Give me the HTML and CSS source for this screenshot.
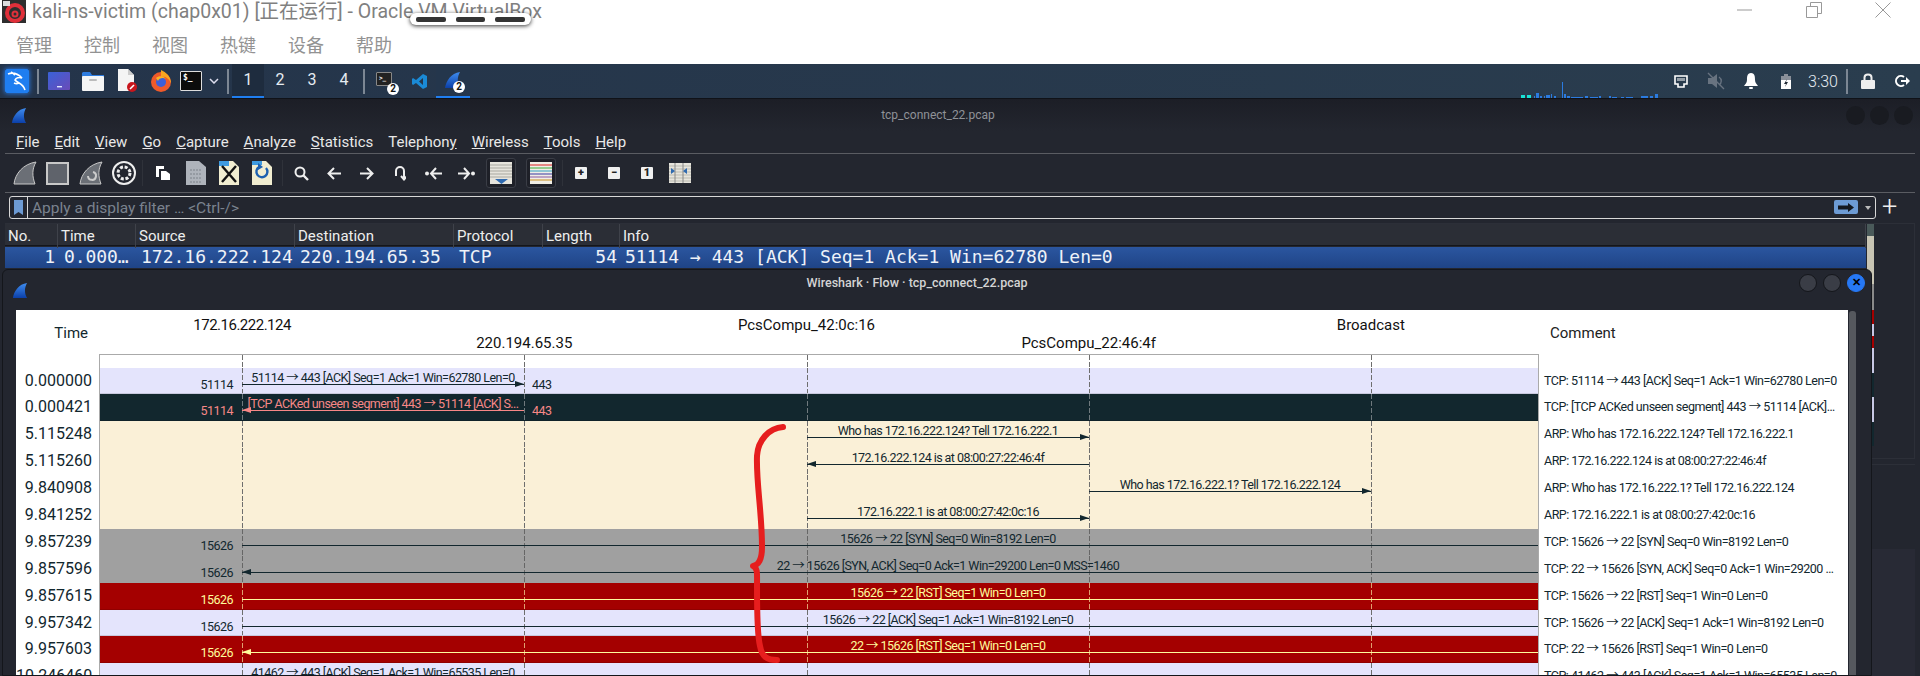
FILE: index.html
```html
<!DOCTYPE html>
<html lang="zh">
<head>
    <meta charset="UTF-8">
    <title>kali-ns-victim (chap0x01) [正在运行] - Oracle VM VirtualBox</title>
    <link rel="stylesheet" href="styles.css">
</head>
<body>

<svg class="defs" width="0" height="0">
    <defs>
        <linearGradient id="finBlue" x1="0" y1="0" x2="0" y2="1">
            <stop offset="0" stop-color="#3f8df0"/>
            <stop offset="1" stop-color="#0b3fa8"/>
        </linearGradient>
        <symbol id="fin" viewBox="0 0 18 18">
            <path d="M1 17C2 10 7 2 16 1C13 6 13 12 16 17Z"/>
        </symbol>
    </defs>
</svg>

<div class="desktop">

    <!-- virtualbox window chrome -->
    <div class="vbox-title">
        <svg class="vbox-logo" width="24" height="23" viewBox="0 0 24 23">
            <rect width="24" height="23" fill="#2e2e2e"/>
            <circle cx="13" cy="13" r="8" fill="none" stroke="#e0303a" stroke-width="4"/>
            <circle cx="13" cy="14" r="2.5" fill="none" stroke="#e0303a" stroke-width="2"/>
            <rect x="1" y="1" width="7" height="5" fill="#ddd"/>
        </svg>
        <span class="vbox-name">kali-ns-victim (chap0x01) [正在运行] - Oracle VM VirtualBox</span>
        <div class="mini-bar"><i></i><i class="short"></i><i></i></div>
        <div class="win-btns">
            <svg width="16" height="16" viewBox="0 0 16 16"><path d="M0 8H15" stroke="#999"/></svg>
            <svg width="16" height="16" viewBox="0 0 16 16"><path d="M.5 4.5H11.5V15.5H.5ZM4.5 4V.5H15.5V11.5H12" fill="none" stroke="#999"/></svg>
            <svg width="16" height="16" viewBox="0 0 16 16"><path d="M.5.5L15.5 15.5M15.5.5L.5 15.5" stroke="#999"/></svg>
        </div>
    </div>
    <div class="vbox-menu">
        <span>管理</span><span>控制</span><span>视图</span><span>热键</span><span>设备</span><span>帮助</span>
    </div>

    <!-- kali panel -->
    <div class="taskbar">
        <div class="slot">
            <svg class="kali" width="24" height="24" viewBox="0 0 24 24">
                <rect width="24" height="24" rx="2" fill="#1f7ef0"/>
                <path d="M3 5C8 3 13 5 17 9C14 8 11 9 10 11C12 14 18 14 20 21M14 14C12 15 11 15 9 14M6 3L10 6" fill="none" stroke="#fff" stroke-width="1.6"/>
            </svg>
        </div>
        <div class="tb-sep"></div>
        <div class="slot">
            <svg width="22" height="18" viewBox="0 0 22 18">
                <defs><linearGradient id="deskGrad" x1="0" x2="1" y1="0" y2="1"><stop offset="0" stop-color="#3a62d8"/><stop offset="1" stop-color="#6a4bb8"/></linearGradient></defs>
                <rect width="22" height="18" rx="1" fill="url(#deskGrad)"/>
                <rect x="9" y="14" width="5" height="1.4" fill="#dfe6ff"/>
            </svg>
        </div>
        <div class="slot">
            <svg width="22" height="20" viewBox="0 0 22 20">
                <path d="M0 2V6H22V4H10L8 1H1Z" fill="#2f7de0"/>
                <rect y="5" width="22" height="15" rx="1" fill="#f5f5f5"/>
                <rect x="7" y="8" width="8" height="2" rx="1" fill="#bbb"/>
            </svg>
        </div>
        <div class="slot">
            <svg width="20" height="24" viewBox="0 0 20 24">
                <path d="M1 0H11L17 6V22H1Z" fill="#f4f4f4"/>
                <path d="M11 0V6H17Z" fill="#ccc"/>
                <circle cx="15" cy="18" r="5" fill="#c8161d"/>
                <path d="M13 20L17 16" stroke="#fff" stroke-width="1.6"/>
            </svg>
        </div>
        <div class="slot">
            <svg width="22" height="24" viewBox="0 0 22 24">
                <circle cx="11" cy="13" r="10" fill="#ef5a2a"/>
                <path d="M11 1C16 3 21 8 21 14C18 8 14 7 11 8Z" fill="#f9a51f"/>
                <circle cx="11" cy="13" r="5" fill="#3d5fd8"/>
                <path d="M6 9C9 6 14 7 16 10C13 8 9 9 8 12Z" fill="#fbb423"/>
            </svg>
        </div>
        <div class="slot slot-term">
            <div class="term-icon">$_</div>
        </div>
        <div class="slot slot-chev">
            <svg width="10" height="6" viewBox="0 0 10 6"><path d="M1 1L5 5L9 1" fill="none" stroke="#dde" stroke-width="1.5"/></svg>
        </div>
        <div class="tb-sep"></div>
        <div class="workspaces">
            <span class="ws active">1</span><span class="ws">2</span><span class="ws">3</span><span class="ws">4</span>
        </div>
        <div class="tb-sep"></div>
        <div class="slot">
            <div class="term-icon small">&gt;_</div>
            <span class="badge">2</span>
        </div>
        <div class="slot">
            <svg width="15" height="15" viewBox="0 0 15 15">
                <path d="M11 0L15 2V13L11 15L4 9L1 11L0 10V5L1 4L4 6ZM11 4L7 7.5L11 11Z" fill="#1a8ad6"/>
            </svg>
        </div>
        <div class="slot active-app">
            <svg width="18" height="18" class="fin-blue"><use href="#fin"/></svg>
            <span class="badge">2</span>
        </div>

        <div class="tray">
            <svg class="cpu" width="141" height="16" viewBox="0 0 141 16">
                <rect x="0" y="13" width="4" height="3" fill="#19e3d6"/>
                <rect x="6" y="13" width="4" height="3" fill="#19e3d6"/>
                <path d="M13 14h1v2h-1zM15 11h3v5h-3zM19 14h2v2h-2zM23 14h1v2h-1zM25 13h4v3h-4zM30 12h1v4h-1zM33 14h2v2h-2zM41 0h1v16h-1zM43 12h2v4h-2zM46 14h3v2h-3zM50 15h12v1H50zM64 14h3v2h-3zM69 15h8v1h-8zM78 14h2v2h-2zM88 14h2v2h-2zM91 15h5v1h-5zM100 15h3v1h-3zM105 15h7v1h-7zM120 14h7v2h-7zM129 14h3v2h-3zM134 12h3v4h-3z" fill="#2b7be0"/>
            </svg>
            <span class="tray-slot">
                <svg width="14" height="13" viewBox="0 0 14 13"><path d="M1 1H13V9H10V12H4V9H1Z" fill="none" stroke="#fff" stroke-width="1.6"/><path d="M4 3V6M6 3V6M8 3V6M10 3V6" stroke="#fff"/></svg>
            </span>
            <span class="tray-slot">
                <svg width="18" height="18" viewBox="0 0 18 18"><path d="M1 6H5L10 2V16L5 12H1Z" fill="#687380"/><path d="M12 5C15 7 15 11 12 13M1 1L17 17" fill="none" stroke="#687380" stroke-width="1.4"/></svg>
            </span>
            <span class="tray-slot">
                <svg width="14" height="16" viewBox="0 0 14 16"><path d="M7 0C11 0 11 4 11 7C11 10 13 11 14 13H0C1 11 3 10 3 7C3 4 3 0 7 0Z" fill="#fff"/><rect x="5" y="14" width="4" height="2" rx="1" fill="#fff"/></svg>
            </span>
            <span class="tray-slot">
                <svg width="10" height="15" viewBox="0 0 10 15"><rect y="2" width="10" height="13" fill="#fff"/><rect y="2" width="10" height="4" fill="#8a8f98"/><rect x="3" width="4" height="2" fill="#8a8f98"/><path d="M6 5L3 10H5L4 13L7 8H5Z" fill="#222b36"/></svg>
            </span>
            <span class="clock">3:30</span>
            <div class="tb-sep"></div>
            <span class="tray-slot wide">
                <svg width="14" height="16" viewBox="0 0 14 16"><rect y="7" width="14" height="9" rx="1" fill="#eee"/><path d="M3.5 7V4.5C3.5 0.5 10.5 0.5 10.5 4.5V7" fill="none" stroke="#eee" stroke-width="2"/></svg>
            </span>
            <span class="tray-slot wide">
                <svg width="15" height="14" viewBox="0 0 15 14"><path d="M9 3A5 5 0 1 0 9 11" fill="none" stroke="#fff" stroke-width="2"/><path d="M6 6H11V3L15 7L11 11V8H6Z" fill="#fff"/></svg>
            </span>
        </div>
    </div>

    <!-- wireshark main window -->
    <div class="ws-window">
        <div class="ws-title">
            <svg width="18" height="18" class="fin-blue"><use href="#fin"/></svg>
            <span class="ws-name">tcp_connect_22.pcap</span>
            <div class="ws-dots"><i></i><i></i><i></i></div>
        </div>
        <div class="ws-menu">
            <span><u>F</u>ile</span><span><u>E</u>dit</span><span><u>V</u>iew</span><span><u>G</u>o</span><span><u>C</u>apture</span><span><u>A</u>nalyze</span><span><u>S</u>tatistics</span><span>Telephon<u>y</u></span><span><u>W</u>ireless</span><span><u>T</u>ools</span><span><u>H</u>elp</span>
        </div>
        <div class="ws-toolbar">
            <span class="tool"><svg width="24" height="24" viewBox="0 0 24 24"><path d="M1 23C2 13 10 3 23 1C19 8 19 15 22 23Z" fill="#6b6f76" stroke="#c8c8c8"/></svg></span>
            <span class="tool"><svg width="23" height="23" viewBox="0 0 23 23"><rect x="1" y="1" width="21" height="21" fill="#5f636b" stroke="#c8c8c8" stroke-width="2"/></svg></span>
            <span class="tool"><svg width="24" height="24" viewBox="0 0 24 24"><path d="M1 23C2 13 10 3 23 1C19 8 19 15 22 23Z" fill="#6b6f76" stroke="#c8c8c8"/><path d="M9 15A4 4 0 1 0 14 11" fill="none" stroke="#ccc" stroke-width="2"/></svg></span>
            <span class="tool"><svg width="24" height="24" viewBox="0 0 24 24"><circle cx="12" cy="12" r="11" fill="none" stroke="#eee" stroke-width="2"/><circle cx="12" cy="12" r="6" fill="none" stroke="#eee" stroke-width="3" stroke-dasharray="3 1.7"/></svg></span>
            <span class="tool-sep"></span>
            <span class="tool"><svg width="16" height="16" viewBox="0 0 16 16"><path d="M1 1H9V4H4V12H1Z" fill="#fff"/><path d="M6 6H11L15 9V15H6Z" fill="#fff"/></svg></span>
            <span class="tool"><svg width="20" height="24" viewBox="0 0 20 24"><path d="M0 0H13L20 6V24H0Z" fill="#aeb3bb"/><path d="M4 9H16M4 13H16M4 17H16M4 21H16" stroke="#7d828a" stroke-dasharray="2 1"/></svg></span>
            <span class="tool"><svg width="20" height="24" viewBox="0 0 20 24"><path d="M0 0H14L20 6V24H0Z" fill="#f1edd0"/><path d="M0 0H10V5H0Z" fill="#3f9be0"/><path d="M3 5L17 21M17 5L3 21" stroke="#111" stroke-width="2.4"/></svg></span>
            <span class="tool"><svg width="20" height="24" viewBox="0 0 20 24"><path d="M0 0H14L20 6V24H0Z" fill="#f1edd0"/><path d="M0 0H10V4H0Z" fill="#3f9be0"/><path d="M14 7A5.5 5.5 0 1 1 7 6" fill="none" stroke="#1c60b0" stroke-width="2.4"/><path d="M6 2L11 6L6 9Z" fill="#1c60b0"/></svg></span>
            <span class="tool-sep sep2"></span>
            <span class="tool"><svg width="15" height="15" viewBox="0 0 15 15"><circle cx="6" cy="6" r="4.5" fill="none" stroke="#eee" stroke-width="2"/><path d="M9 9L14 14" stroke="#eee" stroke-width="2.4"/></svg></span>
            <span class="tool"><svg width="14" height="13" viewBox="0 0 14 13"><path d="M7 1L1.5 6.5L7 12M2 6.5H14" fill="none" stroke="#eee" stroke-width="2"/></svg></span>
            <span class="tool"><svg width="14" height="13" viewBox="0 0 14 13"><path d="M7 1L12.5 6.5L7 12M12 6.5H0" fill="none" stroke="#eee" stroke-width="2"/></svg></span>
            <span class="tool"><svg width="12" height="15" viewBox="0 0 12 15"><path d="M2 10V5A4 4 0 0 1 10 5V13M7 10L10 13.5L13 10" fill="none" stroke="#eee" stroke-width="2"/></svg></span>
            <span class="tool"><svg width="17" height="13" viewBox="0 0 17 13"><circle cx="2" cy="6.5" r="2" fill="#eee"/><path d="M11 1L6 6.5L11 12M6.500 6.5H17" fill="none" stroke="#eee" stroke-width="2"/></svg></span>
            <span class="tool"><svg width="17" height="13" viewBox="0 0 17 13"><circle cx="15" cy="6.5" r="2" fill="#eee"/><path d="M6 1L11 6.5L6 12M10.500 6.500H0" fill="none" stroke="#eee" stroke-width="2"/></svg></span>
            <span class="tool-btn">
                <svg width="22" height="22" viewBox="0 0 22 22"><rect width="22" height="22" fill="#e6e4dc"/><path d="M0 3H22M0 6H22M0 9H22M0 12H22M0 15H22" stroke="#a9a8a0"/><path d="M5 17H18L11.500 22Z" fill="#2f6ab0"/></svg>
            </span>
            <span class="tool-btn">
                <svg width="22" height="22" viewBox="0 0 22 22"><rect width="22" height="22" fill="#f0eee6"/><path d="M0 3H22" stroke="#d82020"/><path d="M0 6H22" stroke="#3aa838"/><path d="M0 9H22" stroke="#30a0c0"/><path d="M0 12H22" stroke="#3838a0"/><path d="M0 15H22" stroke="#8a5aa0"/><path d="M0 18H22" stroke="#c89020"/></svg>
            </span>
            <span class="tool-sep sep3"></span>
            <span class="tool"><span class="zoom-key">+</span></span>
            <span class="tool"><span class="zoom-key">−</span></span>
            <span class="tool"><span class="zoom-key">1</span></span>
            <span class="tool"><svg width="22" height="20" viewBox="0 0 22 20"><rect width="22" height="20" fill="#e6e4dc"/><path d="M0 3H22M0 6H22M0 9H22M0 12H22M0 15H22M0 18H22" stroke="#bab9b0"/><path d="M6 0V20M14 0V20" stroke="#888"/><path d="M2 5L6 8L2 11ZM18 5L14 8L18 11Z" fill="#2f6ab0"/></svg></span>
        </div>
        <div class="filter-row">
            <div class="filter">
                <span class="bookmark"><svg width="9" height="15" viewBox="0 0 9 15"><path d="M0 0H9V15L4.500 12L0 15Z" fill="#6d9bd4"/></svg></span>
                <span class="filter-text">Apply a display filter … &lt;Ctrl-/&gt;</span>
                <span class="go-btn"><svg width="16" height="9" viewBox="0 0 16 9"><path d="M0 2.500H10V0L16 4.500L10 9V6.500H0Z" fill="#14181f"/></svg></span>
                <span class="filter-drop"></span>
            </div>
            <span class="filter-plus">+</span>
        </div>
        <div class="pkt-pane">
            <div class="pkt-list">
                <div class="pkt-head">
                    <span class="c-no">No.</span><span class="c-time">Time</span><span class="c-src">Source</span><span class="c-dst">Destination</span><span class="c-proto">Protocol</span><span class="c-len">Length</span><span class="c-info">Info</span>
                </div>
                <div class="pkt-row">
                    <span class="c-no num">1</span><span class="c-time">0.000…</span><span class="c-src">172.16.222.124</span><span class="c-dst">220.194.65.35</span><span class="c-proto">TCP</span><span class="c-len num">54</span><span class="c-info">51114 → 443 [ACK] Seq=1 Ack=1 Win=62780 Len=0</span>
                </div>
            </div>
            <div class="pkt-scroll">
                <i class="m-thumb"></i><i class="m-cream"></i><i class="m-gray"></i><i class="m-red"></i><i class="m-lav"></i><i class="m-red short"></i><i class="m-lav long"></i><i class="m-dark"></i><i class="m-lav long"></i><i class="m-dark"></i>
            </div>
        </div>
        <div class="detail-pane"></div>
    </div>

    <!-- flow graph dialog -->
    <div class="flow-window">
        <div class="flow-title">
            <svg width="18" height="18" class="fin-blue"><use href="#fin"/></svg>
            <span class="flow-name">Wireshark · Flow · tcp_connect_22.pcap</span>
            <div class="flow-dots"><i></i><i></i><i class="close">✕</i></div>
        </div>
        <div class="flow-body">
            <div class="flow-panel">
                <div class="head-time">Time</div>
                <div class="hosts">
                    <span class="host tight">172.16.222.124</span>
                    <span class="host low">220.194.65.35</span>
                    <span class="host">PcsCompu_42:0c:16</span>
                    <span class="host low">PcsCompu_22:46:4f</span>
                    <span class="host">Broadcast</span>
                </div>
                <div class="head-comment">Comment</div>

                <div class="times">
                    <div>0.000000</div><div>0.000421</div><div>5.115248</div><div>5.115260</div><div>9.840908</div><div>9.841252</div><div>9.857239</div><div>9.857596</div><div>9.857615</div><div>9.957342</div><div>9.957603</div><div>10.246460</div>
                </div>

                <div class="graph">
                    <div class="gap"></div>

                    <div class="row lav">
                        <span class="port pl">51114</span><span class="port pr">443</span>
                        <span class="lbl n01">51114 → 443 [ACK] Seq=1 Ack=1 Win=62780 Len=0</span>
                        <i class="line n01 to-right"></i>
                    </div>
                    <div class="row dark">
                        <span class="port pl">51114</span><span class="port pr">443</span>
                        <span class="lbl n01">[TCP ACKed unseen segment] 443 → 51114 [ACK] S...</span>
                        <i class="line n01 to-left"></i>
                    </div>
                    <div class="row cream">
                        <span class="lbl n23">Who has 172.16.222.124? Tell 172.16.222.1</span>
                        <i class="line n23 to-right"></i>
                    </div>
                    <div class="row cream">
                        <span class="lbl n23">172.16.222.124 is at 08:00:27:22:46:4f</span>
                        <i class="line n23 to-left"></i>
                    </div>
                    <div class="row cream">
                        <span class="lbl n34">Who has 172.16.222.1? Tell 172.16.222.124</span>
                        <i class="line n34 to-right"></i>
                    </div>
                    <div class="row cream">
                        <span class="lbl n23">172.16.222.1 is at 08:00:27:42:0c:16</span>
                        <i class="line n23 to-right"></i>
                    </div>
                    <div class="row gray">
                        <span class="port pl">15626</span>
                        <span class="lbl n23">15626 → 22 [SYN] Seq=0 Win=8192 Len=0</span>
                        <i class="line n0e"></i>
                    </div>
                    <div class="row gray">
                        <span class="port pl">15626</span>
                        <span class="lbl n23">22 → 15626 [SYN, ACK] Seq=0 Ack=1 Win=29200 Len=0 MSS=1460</span>
                        <i class="line n0e to-left"></i>
                    </div>
                    <div class="row red">
                        <span class="port pl">15626</span>
                        <span class="lbl n23">15626 → 22 [RST] Seq=1 Win=0 Len=0</span>
                        <i class="line n0e"></i>
                    </div>
                    <div class="row lav">
                        <span class="port pl">15626</span>
                        <span class="lbl n23">15626 → 22 [ACK] Seq=1 Ack=1 Win=8192 Len=0</span>
                        <i class="line n0e"></i>
                    </div>
                    <div class="row red">
                        <span class="port pl">15626</span>
                        <span class="lbl n23">22 → 15626 [RST] Seq=1 Win=0 Len=0</span>
                        <i class="line n0e to-left"></i>
                    </div>
                    <div class="row lav">
                        <span class="port pl">41462</span><span class="port pr">443</span>
                        <span class="lbl n01">41462 → 443 [ACK] Seq=1 Ack=1 Win=65535 Len=0</span>
                        <i class="line n01 to-right"></i>
                    </div>
                </div>

                <div class="comments">
                    <div>TCP: 51114 → 443 [ACK] Seq=1 Ack=1 Win=62780 Len=0</div>
                    <div>TCP: [TCP ACKed unseen segment] 443 → 51114 [ACK]…</div>
                    <div>ARP: Who has 172.16.222.124? Tell 172.16.222.1</div>
                    <div>ARP: 172.16.222.124 is at 08:00:27:22:46:4f</div>
                    <div>ARP: Who has 172.16.222.1? Tell 172.16.222.124</div>
                    <div>ARP: 172.16.222.1 is at 08:00:27:42:0c:16</div>
                    <div>TCP: 15626 → 22 [SYN] Seq=0 Win=8192 Len=0</div>
                    <div>TCP: 22 → 15626 [SYN, ACK] Seq=0 Ack=1 Win=29200 …</div>
                    <div>TCP: 15626 → 22 [RST] Seq=1 Win=0 Len=0</div>
                    <div>TCP: 15626 → 22 [ACK] Seq=1 Ack=1 Win=8192 Len=0</div>
                    <div>TCP: 22 → 15626 [RST] Seq=1 Win=0 Len=0</div>
                    <div>TCP: 41462 → 443 [ACK] Seq=1 Ack=1 Win=65535 Len=0</div>
                </div>
            </div>
            <div class="flow-scroll"></div>
        </div>
    </div>

    <!-- red pen mark drawn over the screenshot -->
    <svg class="pen-mark" width="50" height="250" viewBox="0 0 50 250">
        <path d="M34 5C20 6 9 18 8 34C7 60 13 90 13 125C13 136 10 143 4 144C9 146 8 152 8 165C8 190 8 212 11 224C13 235 18 238 28 238" fill="none" stroke="#e61e1e" stroke-width="6" stroke-linecap="round" stroke-linejoin="round"/>
    </svg>
</div>

</body>
</html>
```

FILE: styles.css
```css
* {
    box-sizing: border-box;
}
body {
    margin: 0;
    background: #23262f;
    font-family: Roboto, "Noto Sans CJK SC", sans-serif;
    overflow: hidden;
}
i {
    font-style: normal;
}
.defs {
    position: absolute;
}
.desktop {
    position: relative;
    width: 1920px;
    height: 676px;
    overflow: hidden;
    display: flex;
    flex-direction: column;
}

/* virtualbox chrome */
.vbox-title {
    position: relative;
    height: 36px;
    background: #fff;
    display: flex;
    align-items: flex-start;
    padding-left: 2px;
}
.vbox-logo {
    flex: none;
}
.vbox-name {
    margin-left: 6px;
    font-size: 19.500px;
    line-height: 24px;
    color: #808080;
    white-space: nowrap;
}
.mini-bar {
    position: absolute;
    left: 410px;
    top: 13px;
    width: 121px;
    height: 12px;
    background: #fff;
    border-radius: 6px;
    box-shadow: 0 1px 4px rgba(0, 0, 0, 0.8);
    display: flex;
    justify-content: space-between;
    align-items: center;
    padding: 0 6px;
}
.mini-bar i {
    width: 30px;
    height: 5px;
    border-radius: 2px;
    background: #333;
}
.mini-bar i.short {
    width: 29px;
}
.win-btns {
    margin-left: auto;
    display: flex;
    gap: 53px;
    padding: 2px 29px 0 0;
}
.vbox-menu {
    height: 28px;
    background: #fff;
    display: flex;
    gap: 32px;
    padding-left: 16px;
    font-size: 18px;
    line-height: 20px;
    color: #929292;
}

/* kali panel */
.taskbar {
    height: 34px;
    background: linear-gradient(90deg, #24344a, #2a3d4e);
    display: flex;
    align-items: center;
    color: #e6ecf2;
}
.slot {
    position: relative;
    width: 34px;
    height: 34px;
    display: flex;
    align-items: center;
    justify-content: center;
    flex: none;
}
.slot-term {
    width: 26px;
}
.slot-chev {
    width: 20px;
}
.kali {
    box-shadow: 0 0 5px #2a86ff;
}
.term-icon {
    width: 22px;
    height: 20px;
    background: #0c0c0c;
    border: 1px solid #ddd;
    border-radius: 1px;
    font: 700 8px/10px "DejaVu Sans Mono", monospace;
    color: #fff;
    padding: 1px 0 0 2px;
}
.term-icon.small {
    width: 16px;
    height: 14px;
    background: #222;
    border-color: #888;
    font-size: 6px;
    line-height: 7px;
    margin: -5px 2px 0 0;
}
.badge {
    position: absolute;
    right: 3px;
    bottom: 3px;
    width: 12px;
    height: 12px;
    border-radius: 50%;
    background: #fff;
    color: #111;
    font-size: 10px;
    font-weight: 700;
    line-height: 12px;
    text-align: center;
}
.active-app .badge {
    right: 5px;
}
.tb-sep {
    width: 2px;
    height: 25px;
    margin: 0 3px;
    background: #7c8794;
    flex: none;
}
.workspaces {
    display: flex;
    flex: none;
}
.ws {
    width: 32px;
    height: 34px;
    line-height: 31px;
    text-align: center;
    font-size: 16px;
}
.ws.active,
.active-app {
    background: #1e2c3e;
    border-bottom: 2px solid #1f7ef0;
}
.active-app {
    background: #24364c;
}
.fin-blue {
    fill: url(#finBlue);
    display: block;
}
.tray {
    margin-left: auto;
    display: flex;
    align-items: center;
    width: 399px;
    height: 34px;
}
.cpu {
    align-self: flex-end;
    margin-right: 1px;
}
.tray-slot {
    width: 35px;
    display: flex;
    justify-content: center;
}
.tray-slot.wide {
    width: 34px;
}
.clock {
    width: 40px;
    text-align: center;
    font-size: 16px;
    font-weight: 300;
}

/* wireshark main window */
.ws-window {
    flex: 1;
    display: flex;
    flex-direction: column;
    background: #23262f;
    border-top: 1px solid #101218;
    padding: 0 5px;
    color: #e8e8e8;
    min-height: 0;
}
.ws-title {
    position: relative;
    height: 32px;
    display: flex;
    align-items: center;
    padding-left: 5px;
    margin: 0 -5px;
    background: linear-gradient(#1c1e26, #23262f);
}
.ws-title .fin-blue,
.flow-title .fin-blue {
    width: 17px;
    height: 17px;
    margin-left: 6px;
}
.ws-name {
    position: absolute;
    left: 0;
    right: 0;
    top: 9px;
    text-align: center;
    font-size: 12px;
    color: #8f9298;
    padding-right: 44px;
}
.ws-dots {
    margin-left: auto;
    display: flex;
    gap: 5px;
    padding-right: 7px;
}
.ws-dots i {
    width: 19px;
    height: 19px;
    border-radius: 50%;
    background: #191b21;
}
.ws-menu {
    height: 23px;
    border-bottom: 1px solid #5a5c62;
    display: flex;
    gap: 15px;
    padding: 1px 0 0 11px;
    font-size: 15px;
    line-height: 20px;
    white-space: nowrap;
}
.ws-toolbar {
    height: 39px;
    border-bottom: 1px solid #5a5c62;
    display: flex;
    align-items: center;
    padding-left: 3px;
}
.tool {
    width: 33px;
    display: flex;
    justify-content: center;
    align-items: center;
    flex: none;
}
.tool-sep {
    width: 1px;
    height: 26px;
    margin: 0 3px 0 2px;
    background: #2f323a;
    flex: none;
}
.tool-sep.sep2 {
    margin: 0 2px 0 3.500px;
}
.tool-sep.sep3 {
    margin: 0 2px 0 1px;
}
.tool-btn {
    width: 30px;
    height: 30px;
    margin: 0 5px 0 3px;
    background: #1e2028;
    border: 1px solid #3a3d46;
    border-radius: 3px;
    display: flex;
    align-items: center;
    justify-content: center;
    flex: none;
}
.tool-btn + .tool-btn {
    margin-left: 5px;
}
.zoom-key {
    width: 12px;
    height: 12px;
    border-radius: 1px;
    background: #f0f0f0;
    color: #222;
    font-size: 11px;
    font-weight: 900;
    line-height: 12px;
    text-align: center;
}
.filter-row {
    margin-top: 3px;
    height: 22px;
    display: flex;
    align-items: center;
    padding-left: 4px;
    position: relative;
}
.filter {
    width: 1867px;
    height: 23px;
    border: 1px solid #d8d8d8;
    border-radius: 3px;
    display: flex;
    align-items: center;
    position: relative;
}
.bookmark {
    width: 18px;
    height: 21px;
    border-right: 1px solid #d8d8d8;
    display: flex;
    align-items: center;
    justify-content: center;
}
.filter-text {
    margin: 2px 0 0 4px;
    font-size: 15.500px;
    color: #7a828e;
}
.go-btn {
    margin-left: auto;
    margin-right: 17px;
    width: 24px;
    height: 14px;
    background: #6d9bd4;
    border-radius: 2px;
    display: flex;
    align-items: center;
    justify-content: center;
}
.filter-drop {
    position: absolute;
    right: 4px;
    top: 9px;
    border: 3.500px solid transparent;
    border-top: 4px solid #bbb;
}
.filter-plus {
    margin-left: 6px;
    font-size: 27px;
    font-weight: 300;
    line-height: 22px;
    color: #eee;
}
.pkt-pane {
    margin-top: 5px;
    height: 236px;
    display: flex;
    border: 1px solid #2c2f38;
    border-left: 0;
}
.pkt-list {
    width: 1861px;
}
.pkt-head,
.pkt-row {
    display: grid;
    grid-template-columns: 53px 78px 159px 159px 89px 77px 1fr;
    white-space: nowrap;
}
.pkt-head {
    height: 22px;
    background: #2b2e36;
    border-bottom: 1px solid #14161b;
    font-size: 15px;
    line-height: 24px;
    color: #eee;
}
.pkt-head span {
    padding-left: 3px;
    border-right: 1px solid #3f424a;
}
.pkt-row {
    height: 21px;
    margin-top: 1px;
    background: linear-gradient(#2b56a0, #1f4486);
    font: 18px/20px "DejaVu Sans Mono", monospace;
    color: #eef2f8;
}
.pkt-row span {
    padding-left: 5px;
    overflow: hidden;
}
.pkt-row .num {
    text-align: right;
    padding: 0 3px 0 0;
}
.pkt-row .c-time {
    padding-left: 6px;
    letter-spacing: -0.100px;
}
.pkt-scroll {
    width: 7px;
    display: flex;
    flex-direction: column;
    margin-left: 1px;
}
.pkt-scroll i {
    display: block;
    flex: none;
}
.m-thumb {
    height: 12px;
    background: #4a5a5a;
}
.m-cream {
    height: 48px;
    background: #c8c5b4;
}
.m-gray {
    height: 26px;
    background: #8a8a8a;
}
.m-red {
    height: 14px;
    background: #a40000;
}
.m-red.short {
    height: 12px;
}
.m-lav {
    height: 12px;
    background: #c8c8e4;
}
.m-lav.long {
    height: 25px;
}
.m-dark {
    height: 24px;
    background: #12272e;
}
.detail-pane {
    margin-top: 5px;
    flex: 1;
    background: linear-gradient(#23262f 84px, #282a35 84px);
    border-top: 1px solid #2c2f38;
}

/* flow dialog */
.flow-window {
    position: absolute;
    left: 2px;
    top: 269px;
    width: 1870px;
    height: 407px;
    background: #23262f;
    border: 1px solid #14161b;
    border-radius: 6px 6px 0 0;
    display: flex;
    flex-direction: column;
}
.flow-title {
    position: relative;
    height: 40px;
    display: flex;
    align-items: center;
    padding-left: 3px;
    flex: none;
}
.flow-name {
    position: absolute;
    left: 0;
    width: 1828px;
    top: 5px;
    text-align: center;
    font-size: 12.500px;
    font-weight: 500;
    color: #d4d4d4;
}
.flow-dots {
    position: absolute;
    right: 6px;
    top: 4px;
    display: flex;
    gap: 6px;
}
.flow-dots i {
    width: 18px;
    height: 18px;
    border-radius: 50%;
    background: #3a3d46;
    border: 1px solid #14161b;
}
.flow-dots i.close {
    background: #2678f5;
    border-color: #2678f5;
    color: #000;
    font-size: 11px;
    font-weight: 900;
    line-height: 16px;
    text-align: center;
}
.flow-body {
    flex: 1;
    display: flex;
    padding-left: 13px;
    min-height: 0;
}
.flow-panel {
    width: 1832px;
    background: #fff;
    display: grid;
    grid-template-columns: 83px 1440px 1fr;
    grid-template-rows: 44px 1fr;
    overflow: hidden;
    color: #12272e;
}
.flow-scroll {
    width: 7px;
    margin-left: 1px;
    margin-top: 1px;
    background: #55585e;
    border-radius: 3px 3px 0 0;
}
.head-time {
    font-size: 15px;
    line-height: 47px;
    text-align: right;
    padding-right: 11px;
}
.hosts {
    display: flex;
    padding-left: 2px;
    font-size: 15px;
    line-height: 18px;
    padding-top: 6px;
    color: #111;
}
.host {
    width: 282.200px;
    text-align: center;
    flex: none;
}
.host.low {
    padding-top: 18px;
}
.host.tight {
    letter-spacing: -0.500px;
}
.head-comment {
    font-size: 15px;
    line-height: 47px;
    padding-left: 11px;
    color: #222;
}
.times {
    padding-top: 13.500px;
    text-align: right;
    padding-right: 7px;
    font-size: 16px;
}
.times div,
.comments div {
    height: 26.900px;
    line-height: 26px;
    white-space: nowrap;
}
.comments {
    padding: 13.500px 0 0 5px;
    font-size: 12.500px;
    letter-spacing: -0.500px;
}
.graph {
    border: 1px solid #aaa;
    border-bottom: 0;
    background: #fff;
}
.gap,
.row {
    --dash: #6e6e6e;
    background-image:
        repeating-linear-gradient(var(--dash) 0 5px, transparent 5px 7px),
        repeating-linear-gradient(var(--dash) 0 5px, transparent 5px 7px),
        repeating-linear-gradient(var(--dash) 0 5px, transparent 5px 7px),
        repeating-linear-gradient(var(--dash) 0 5px, transparent 5px 7px),
        repeating-linear-gradient(var(--dash) 0 5px, transparent 5px 7px);
    background-size: 1px 100%;
    background-repeat: no-repeat;
    background-position: 142px 0, 424px 0, 707px 0, 989px 0, 1271px 0;
}
.gap {
    height: 12.500px;
}
.row {
    position: relative;
    height: 26.900px;
    color: #12272e;
    font-size: 12.500px;
    letter-spacing: -0.550px;
}
.row.lav,
.row.dark,
.row.red {
    border-bottom: 1px solid rgba(0, 0, 0, 0.12);
}
.row.lav {
    background-color: #e4e4fc;
}
.row.dark {
    background-color: #12272e;
    color: #f78787;
    --dash: #707a7e;
}
.row.cream {
    background-color: #faf0d7;
}
.row.gray {
    background-color: #a0a0a0;
    --dash: #666;
}
.row.red {
    background-color: #a40000;
    color: #fffc9c;
    --dash: #e0a070;
}
.port {
    position: absolute;
    top: 8px;
    line-height: 17px;
    white-space: nowrap;
}
.pl {
    right: 1305px;
}
.pr {
    left: 432px;
}
.lbl {
    position: absolute;
    top: 1px;
    line-height: 17px;
    display: flex;
    justify-content: center;
    white-space: nowrap;
}
.line {
    position: absolute;
    top: 16px;
    height: 1px;
    background: currentColor;
}
.n01 {
    left: 142px;
    width: 282px;
}
.n23 {
    left: 707px;
    width: 282px;
}
.n34 {
    left: 989px;
    width: 282px;
}
.n0e {
    left: 142px;
    right: 0;
}
.to-right::after,
.to-left::after {
    content: "";
    position: absolute;
    top: -3px;
    border-top: 3.500px solid transparent;
    border-bottom: 3.500px solid transparent;
}
.to-right::after {
    right: 0;
    border-left: 9px solid currentColor;
}
.to-left::after {
    left: 0;
    border-right: 9px solid currentColor;
}

/* pen mark */
.pen-mark {
    position: absolute;
    left: 749px;
    top: 422px;
}
```
